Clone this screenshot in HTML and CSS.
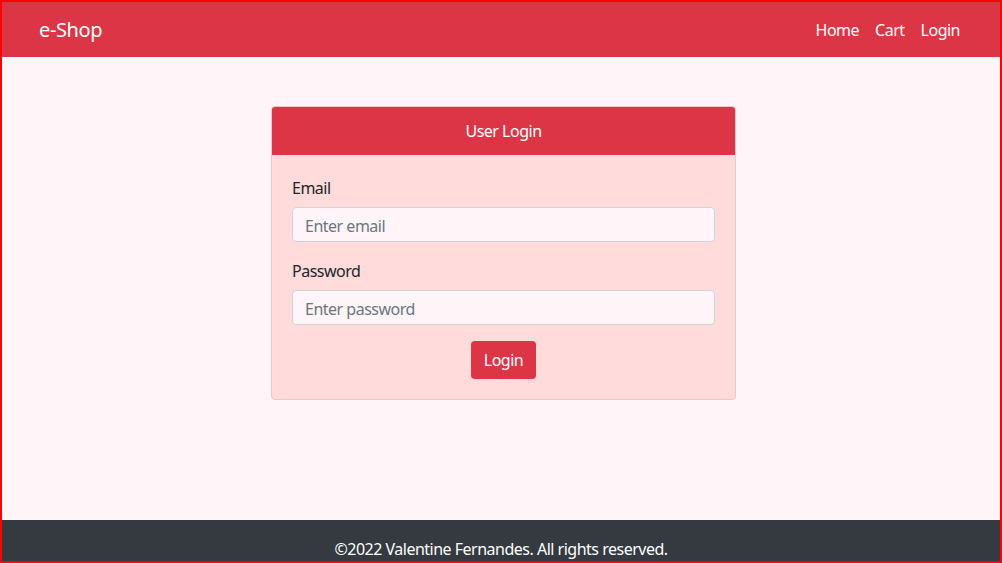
FILE: index.html
```html
<!DOCTYPE html>
<html lang="en">
<head>
<meta charset="utf-8">
<title>e-Shop</title>
<link rel="stylesheet" href="styles.css">
</head>
<body>
<div class="frame">
  <nav class="navbar">
    <a class="brand" href="#">e-Shop</a>
    <ul class="nav">
      <li><a href="#">Home</a></li>
      <li><a href="#">Cart</a></li>
      <li><a href="#">Login</a></li>
    </ul>
  </nav>
  <main class="main">
    <div class="card">
      <div class="card-header">User Login</div>
      <form class="card-body">
        <label class="label" for="email">Email</label>
        <input class="input" id="email" type="email" placeholder="Enter email">
        <label class="label label-gap" for="password">Password</label>
        <input class="input" id="password" type="password" placeholder="Enter password">
        <div class="actions">
          <button class="btn" type="button">Login</button>
        </div>
      </form>
    </div>
  </main>
  <footer class="footer">©2022 Valentine Fernandes. All rights reserved.</footer>
</div>
</body>
</html>
```
FILE: styles.css
```css
* { box-sizing: border-box; }
html, body { margin: 0; padding: 0; }
body {
  font-family: "Noto Sans", "Open Sans", sans-serif;
  font-size: 16px;
  line-height: 24px;
  letter-spacing: -0.5px;
  color: #212529;
}
.frame {
  height: 563px;
  border: 2px solid #ff0000;
  display: flex;
  flex-direction: column;
  background: #fff5f8;
  overflow: hidden;
}
.navbar {
  height: 55px;
  flex: none;
  background: #dc3545;
  display: flex;
  align-items: center;
  justify-content: space-between;
  padding: 0 40px 0 37px;
}
.brand {
  color: #fff;
  text-decoration: none;
  font-size: 20px;
  line-height: 30px;
  letter-spacing: -0.4px;
}
.nav {
  list-style: none;
  margin: 0;
  padding: 0;
  display: flex;
  gap: 16px;
}
.nav a {
  color: #fff;
  text-decoration: none;
}
.main {
  flex: 1;
  display: flex;
  justify-content: center;
  align-items: flex-start;
  padding-top: 49px;
  padding-left: 5px;
}
.card {
  width: 465px;
  border: 1px solid #f1c6c9;
  border-radius: 4px;
  background: #ffdbdb;
  overflow: hidden;
}
.card-header {
  height: 48px;
  background: #dc3545;
  color: #fff;
  text-align: center;
  line-height: 48px;
}
.card-body {
  display: flex;
  flex-direction: column;
  padding: 20px;
  margin: 0;
}
.label {
  display: block;
  padding-top: 1px;
  margin-bottom: 7px;
}
.label-gap { margin-top: 16px; }
.input {
  height: 35px;
  width: 100%;
  border: 1px solid #ced4da;
  border-radius: 4px;
  background: #fff5f8;
  padding: 3px 12px 0;
  font: inherit;
  letter-spacing: inherit;
  color: #495057;
}
.input::placeholder { color: #6c757d; }
.actions {
  display: flex;
  justify-content: center;
  margin-top: 16px;
}
.btn {
  height: 38px;
  padding: 0 13px;
  border: none;
  border-radius: 4px;
  background: #dc3545;
  color: #fff;
  font: inherit;
  letter-spacing: inherit;
}
.footer {
  height: 41px;
  flex: none;
  background: #343a40;
  color: #fff;
  text-align: center;
  padding-top: 17px;
}
```
